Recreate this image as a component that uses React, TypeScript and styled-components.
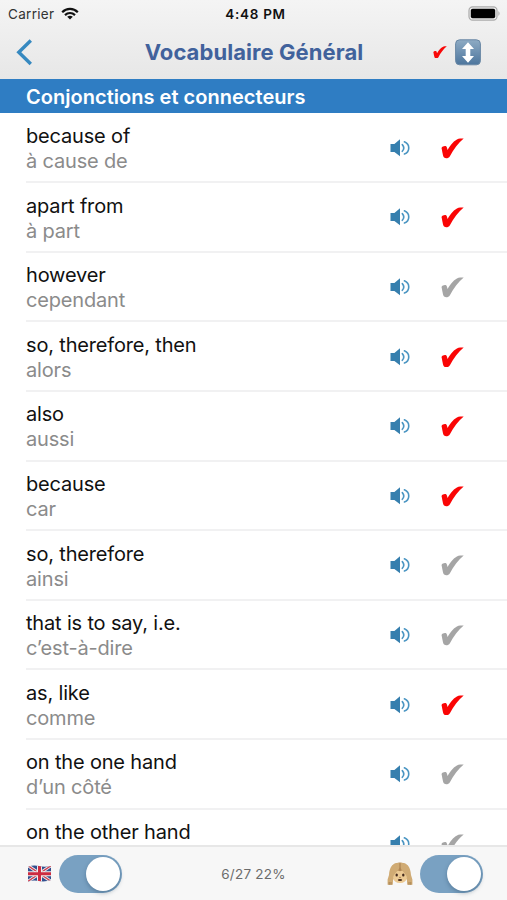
import React from "react";
import styled, { createGlobalStyle } from "styled-components";

const Global = createGlobalStyle`
  * { box-sizing: border-box; }
  body { margin: 0; background: #fff; font-family: Inter, "Liberation Sans", sans-serif; }
`;

const Screen = styled.main`
  width: 507px;
  height: 900px;
  display: flex;
  flex-direction: column;
  overflow: hidden;
  background: #fff;
`;

const Top = styled.header`
  flex: none;
  height: 79px;
  background: linear-gradient(#f4f4f4, #e7e7e7);
`;

const StatusBar = styled.div`
  display: grid;
  grid-template-columns: 1fr auto 1fr;
  align-items: center;
  height: 27px;
  padding: 0 6px 0 8px;
  color: #111;
  font-size: 13.5px;
`;

const Carrier = styled.div`
  display: flex;
  align-items: center;
  gap: 7px;
  color: #333;
  letter-spacing: 0.3px;
`;

const Clock = styled.div`
  font-weight: 600;
  letter-spacing: 0.7px;
  margin-left: 2px;
`;

const BatteryBox = styled.div`
  display: flex;
  justify-content: flex-end;
`;

const NavBar = styled.div`
  display: grid;
  grid-template-columns: 100px 1fr 100px;
  align-items: center;
  height: 50px;
`;

const Back = styled.div`
  display: flex;
  padding-left: 15px;
`;

const Title = styled.h1`
  margin: 0;
  padding-left: 1px;
  text-align: center;
  white-space: nowrap;
  font-size: 22px;
  line-height: 30px;
  font-weight: 700;
  letter-spacing: 0.07px;
  color: #41629c;
`;

const Actions = styled.div`
  display: flex;
  align-items: center;
  gap: 8px;
  padding: 0 0 0 26px;
`;

const Section = styled.h2`
  flex: none;
  margin: 0;
  height: 34px;
  padding: 1px 26px 0;
  line-height: 35px;
  font-size: 20px;
  font-weight: 600;
  letter-spacing: 0.03px;
  color: #fff;
  background: #2f7dc3;
`;

const List = styled.ul`
  flex: 1;
  min-height: 0;
  overflow: hidden;
  margin: 0;
  padding: 0.5px 0 0;
  list-style: none;
`;

const Row = styled.li`
  display: grid;
  grid-template-columns: 1fr 51px 66px;
  height: 69.62px;
  margin-left: 26px;
  border-bottom: 2px solid #f1f1f2;
`;

const Words = styled.div`
  display: flex;
  flex-direction: column;
  padding-top: 10.5px;
`;

const Term = styled.span<{ $ls: number }>`
  font-size: 20px;
  line-height: 25px;
  white-space: nowrap;
  letter-spacing: ${(p) => p.$ls}px;
  color: #111;
`;

const Meaning = styled(Term)`
  color: #8b8b8b;
`;

const IconCell = styled.div<{ $top: number }>`
  padding-top: ${(p) => p.$top}px;
  line-height: 0;
`;

const Footer = styled.footer`
  flex: none;
  display: grid;
  grid-template-columns: 1fr auto 1fr;
  align-items: center;
  height: 55px;
  padding: 0 24px 0 27px;
  background: #f7f7f7;
  border-top: 2px solid #e7e7e7;
`;

const Group = styled.div<{ $end?: boolean }>`
  display: flex;
  align-items: center;
  gap: 7px;
  justify-content: ${(p) => (p.$end ? "flex-end" : "flex-start")};
`;

const Score = styled.div`
  font-size: 13.5px;
  color: #6b6b6b;
  margin-left: -3px;
  letter-spacing: 0.25px;
`;

const Switch = styled.div`
  display: flex;
  justify-content: flex-end;
  align-items: center;
  width: 63px;
  height: 38px;
  padding: 2px;
  border-radius: 19px;
  background: #79a1c2;
`;

const Knob = styled.div`
  width: 34px;
  height: 34px;
  border-radius: 50%;
  background: #fff;
  box-shadow: 0 2px 4px rgba(30, 60, 90, 0.35);
`;

const Check = ({ color, width = 23 }: { color: string; width?: number }) => (
  <svg width={width} height={(width * 20) / 22} viewBox="0 0 22 20">
    <path
      fill={color}
      d="M.5 9.5C1.2 8.2 3.6 7.3 4.9 8C5.8 8.7 5.9 10.3 6.3 11.5C9.2 6.5 12.7 2.2 16.7.8C18.4.3 20.3.3 21.7.5C16.4 4.8 12 11.2 8.5 17.5C7.3 19.6 4.4 20.1 3 18.7C1.7 17.3 1.2 12.2.5 9.5Z"
    />
  </svg>
);

const Speaker = () => (
  <svg width="20" height="18" viewBox="0 0 20 18">
    <path fill="#367fae" d="M.5 4.9H4.4L10 .3V17.3L4.4 13H.5Z" />
    <g fill="none" stroke="#4a95c2" strokeLinecap="round">
      <path strokeWidth="1.6" d="M12.3 5.6Q15.3 9 12.3 12.3" />
      <path strokeWidth="1.6" d="M14.4 2.8C20.2 5.2 20.2 12.6 14.4 15" />
    </g>
  </svg>
);

const Wifi = () => (
  <svg width="18" height="13" viewBox="0 0 18 13">
    <g fill="none" stroke="#111" strokeWidth="2.2">
      <path d="M1.2 5.2C5.6.7 12.4.7 16.8 5.2" />
      <path d="M4 8.1C6.9 5.3 11.1 5.3 14 8.1" />
    </g>
    <path fill="#111" d="M6.2 9.7Q9 7.6 11.8 9.7L9 12.6Z" />
  </svg>
);

const Battery = () => (
  <svg width="33" height="15" viewBox="0 0 33 15">
    <rect x="1" y=".8" width="28" height="13.4" rx="3.6" fill="#eee" stroke="#aaa" strokeWidth="1.2" />
    <rect x="2.8" y="2.7" width="24.4" height="9.6" rx="1.8" fill="#000" />
    <path fill="#999" d="M30.5 5Q32.5 7.5 30.5 10Z" />
  </svg>
);

const Chevron = () => (
  <svg width="18" height="28" viewBox="0 0 18 28">
    <path d="M15.8 2.5L3.8 14.2L15.8 26" fill="none" stroke="#3689c0" strokeWidth="3.4" />
  </svg>
);

const SortIcon = () => (
  <svg width="26" height="27" viewBox="0 0 26 27">
    <defs>
      <linearGradient id="sort" x2="0" y2="1">
        <stop stopColor="#8eabc4" />
        <stop offset="1" stopColor="#4c759d" />
      </linearGradient>
    </defs>
    <rect x=".6" y=".8" width="24.8" height="25" rx="4" fill="url(#sort)" stroke="#6887a4" />
    <path fill="#fff" d="M13 3.2L19 10H15.3V17H19L13 23.8L7 17H10.7V10H7Z" />
  </svg>
);

const Flag = () => (
  <svg width="25" height="20" viewBox="0 0 25 20">
    <defs>
      <clipPath id="flag">
        <path d="M1 3Q6 .8 12 2.1T24 2V16Q18 18.1 12 17T1 17.6Z" />
      </clipPath>
    </defs>
    <g clipPath="url(#flag)">
      <path fill="#334f8e" d="M0 0H25V20H0Z" />
      <path d="M0 1L25 18M0 18L25 1" stroke="#eee" strokeWidth="3.2" />
      <path d="M0 1L25 18M0 18L25 1" stroke="#cc3e50" strokeWidth="1.3" />
      <path d="M12.5 0V20M0 9.7H25" stroke="#eee" strokeWidth="5" />
      <path d="M12.5 0V20M0 9.7H25" stroke="#cd2b41" strokeWidth="3" />
    </g>
  </svg>
);

const Monkey = () => (
  <svg width="26" height="24" viewBox="0 0 26 24">
    <ellipse cx="13" cy="10" rx="9.8" ry="9.6" fill="#b98f5c" />
    <path fill="#ecca94" d="M5.5 15C4.5 9 8 8.2 13 9.2C18 8.2 21.5 9 20.5 15Q19 21 13 21T5.5 15Z" />
    <path fill="#d0ab74" d="M12.8.8C6 .1 2.4 5 2 13L.6 17.5V22.8H5.8L6.2 15C7.5 11 11.4 9.2 12.8 5ZM13.2.8C20 .1 23.6 5 24 13L25.4 17.5V22.8H20.2L19.8 15C18.5 11 14.6 9.2 13.2 5Z" />
    <path d="M13 1.2V8.8" stroke="#a17a49" strokeWidth=".8" />
    <g fill="#442a1d">
      <ellipse cx="9.7" cy="13" rx="1.2" ry="1.5" />
      <ellipse cx="16.3" cy="13" rx="1.2" ry="1.5" />
      <ellipse cx="13" cy="18" rx="2.2" ry="1" />
    </g>
    <path d="M12 15.4H14M2.2 20V23M4 20V23M22 20V23M23.8 20V23" stroke="#a07a49" strokeWidth=".8" />
  </svg>
);

type Entry = { term: string; meaning?: string; known: boolean };

const entries: Entry[] = [
  { term: "because of", meaning: "à cause de", known: true },
  { term: "apart from", meaning: "à part", known: true },
  { term: "however", meaning: "cependant", known: false },
  { term: "so, therefore, then", meaning: "alors", known: true },
  { term: "also", meaning: "aussi", known: true },
  { term: "because", meaning: "car", known: true },
  { term: "so, therefore", meaning: "ainsi", known: false },
  { term: "that is to say, i.e.", meaning: "c’est-à-dire", known: false },
  { term: "as, like", meaning: "comme", known: true },
  { term: "on the one hand", meaning: "d’un côté", known: false },
  { term: "on the other hand", known: false },
];

export default function App() {
  return (
    <Screen>
      <Global />
      <Top>
        <StatusBar>
          <Carrier>Carrier <Wifi /></Carrier>
          <Clock>4:48 PM</Clock>
          <BatteryBox><Battery /></BatteryBox>
        </StatusBar>
        <NavBar>
          <Back><Chevron /></Back>
          <Title>Vocabulaire Général</Title>
          <Actions><Check color="#f80808" width={14} /><SortIcon /></Actions>
        </NavBar>
      </Top>
      <Section>Conjonctions et connecteurs</Section>
      <List>
        {entries.map((e) => (
          <Row key={e.term}>
            <Words>
              <Term $ls={-0.17}>{e.term}</Term>
              {e.meaning && <Meaning $ls={-0.17}>{e.meaning}</Meaning>}
            </Words>
            <IconCell $top={25.3}><Speaker /></IconCell>
            <IconCell $top={24.2}><Check color={e.known ? "#fa0505" : "#a5a5a5"} /></IconCell>
          </Row>
        ))}
      </List>
      <Footer>
        <Group><Flag /><Switch><Knob /></Switch></Group>
        <Score>6/27 22%</Score>
        <Group $end><Monkey /><Switch><Knob /></Switch></Group>
      </Footer>
    </Screen>
  );
}
